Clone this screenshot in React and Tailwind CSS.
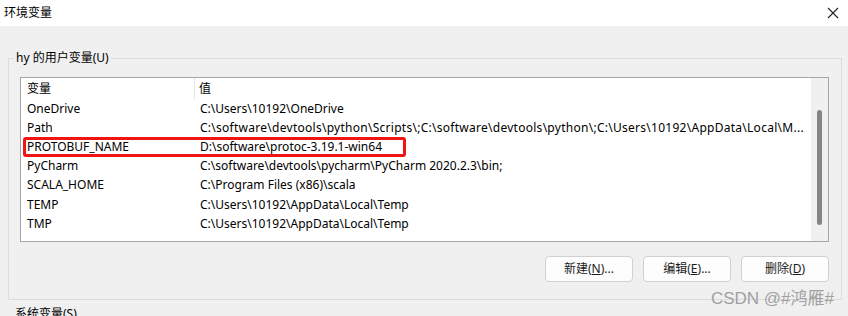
import React from 'react';

const rows = [
  { name: 'OneDrive', value: 'C:\\Users\\10192\\OneDrive' },
  {
    name: 'Path',
    value:
      'C:\\software\\devtools\\python\\Scripts\\;C:\\software\\devtools\\python\\;C:\\Users\\10192\\AppData\\Local\\M...',
    wide: true,
  },
  { name: 'PROTOBUF_NAME', value: 'D:\\software\\protoc-3.19.1-win64' },
  { name: 'PyCharm', value: 'C:\\software\\devtools\\pycharm\\PyCharm 2020.2.3\\bin;' },
  { name: 'SCALA_HOME', value: 'C:\\Program Files (x86)\\scala' },
  { name: 'TEMP', value: 'C:\\Users\\10192\\AppData\\Local\\Temp' },
  { name: 'TMP', value: 'C:\\Users\\10192\\AppData\\Local\\Temp' },
];

const font = "font-['Noto_Sans','Noto_Sans_CJK_SC',sans-serif]";

const WinButton = ({ label, hotkey, suffix }) => (
  <button className="h-[26px] w-[88px] rounded-[4px] border border-[#d0d0d0] bg-[#fdfdfd] text-[12px] text-[#1a1a1a]">
    {label}(<span className="underline">{hotkey}</span>){suffix}
  </button>
);

const App = () => {
  return (
    <div className={`relative h-[316px] w-[848px] overflow-hidden bg-[#f0f0f0] ${font} text-[12px] text-black`}>
      {/* Title bar */}
      <div className="flex h-[26px] items-center justify-between bg-white pl-[4px] pr-[9px]">
        <span className="text-[12px] leading-none">环境变量</span>
        <svg width="12" height="12" viewBox="0 0 12 12" className="text-[#222]">
          <path d="M1 1 L11 11 M11 1 L1 11" stroke="currentColor" strokeWidth="1.1" />
        </svg>
      </div>

      {/* User variables group */}
      <div className="relative ml-[8px] mt-[32px] h-[242px] w-[834px] border border-[#dcdcdc]">
        <span className="absolute -top-[10px] left-[5px] bg-[#f0f0f0] px-[2px] text-[12px] leading-[18px]">
          hy 的用户变量(U)
        </span>

        <div className="relative ml-[11px] mt-[18px] flex h-[165px] w-[809px] border border-[#a6a6a6] bg-white">
          <div className="flex-1">
            {/* Header */}
            <div className="flex h-[21px] items-center">
              <div className="flex h-full w-[174px] items-center border-r border-[#e5e5e5] pl-[6px]">变量</div>
              <div className="pl-[4px]">值</div>
            </div>
            {rows.map((r) => (
              <div key={r.name} className="flex h-[19.2px] items-center whitespace-nowrap">
                <div className="w-[174px] pl-[6px]">{r.name}</div>
                <div className={r.wide ? 'pl-[5px] tracking-[0.27px]' : 'pl-[5px]'}>{r.value}</div>
              </div>
            ))}
          </div>
          {/* Scrollbar */}
          <div className="flex w-[17px] justify-center bg-[#f0f0f0] pt-[32px]">
            <div className="h-[115px] w-[5px] rounded-full bg-[#858585]" />
          </div>

          {/* annotation */}
          <div className="pointer-events-none absolute left-[2px] top-[59px] h-[20px] w-[383px] rounded-[3px] border-[3px] border-[#f01414]" />
        </div>

        <div className="mr-[12px] mt-[14px] flex justify-end gap-[10px]">
          <WinButton label="新建" hotkey="N" suffix="..." />
          <WinButton label="编辑" hotkey="E" suffix="..." />
          <WinButton label="删除" hotkey="D" suffix="" />
        </div>
      </div>

      <div className="ml-[15px] mt-[6px] text-[12px] leading-[16px]">系统变量(S)</div>

      {/* watermark */}
      <div className="absolute bottom-[5px] right-[14px] font-['Liberation_Sans','Noto_Sans_CJK_SC',sans-serif] text-[17px] text-[#a0a0a0]">
        CSDN @#鸿雁#
      </div>
    </div>
  );
};

export default App;
